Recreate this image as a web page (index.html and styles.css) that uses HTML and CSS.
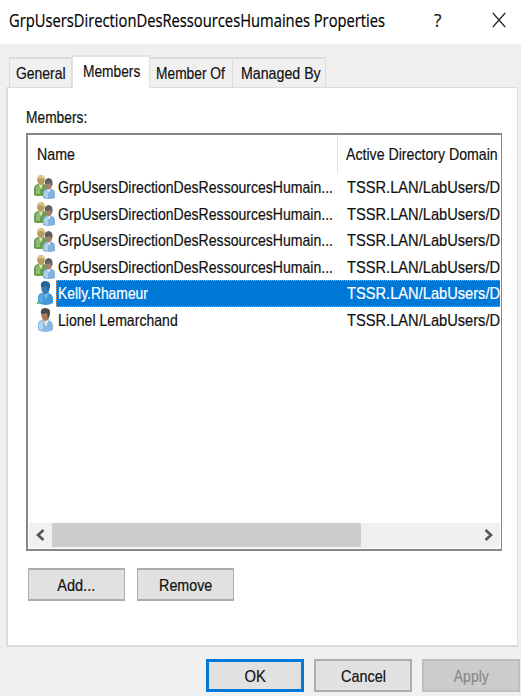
FILE: index.html
```html
<!DOCTYPE html>
<html lang="en">
<head>
<meta charset="utf-8">
<title>GrpUsersDirectionDesRessourcesHumaines Properties</title>
<link rel="stylesheet" href="styles.css">
</head>
<body>
<svg width="0" height="0" class="defs">
  <defs>
    <symbol id="group" viewBox="0 0 21 25">
      <path d="M0 21V14Q1 10 5 10h5q3 1 3 5v7H2z" fill="#67a04c"/>
      <path d="M2 20v-6q1-3 4-3v9z" fill="#91ba7b"/>
      <path d="M5 10h4l-2 6z" fill="#e9ddc4"/>
      <ellipse cx="7" cy="6" rx="3.8" ry="5" fill="#b79b60"/>
      <path d="M3 5Q3 1 7 1q4 0 4 5L7 4z" fill="#d5c68d"/>
      <path d="M9 24v-4q0-5 4-5h4q4 0 4 5v4q-6 2-12 0z" fill="#82b1dd"/>
      <path d="M10 23v-4q1-3 4-3v8z" fill="#acd0ee"/>
      <path d="M13 14h4l-2 5z" fill="#f0efed"/>
      <ellipse cx="14.7" cy="10.5" rx="3.5" ry="5" fill="#a18171"/>
      <path d="M11 10q-1-6 4-6 5 1 3 8l-2-3q-2 1-5 1" fill="#615e60"/>
    </symbol>
    <symbol id="user" viewBox="0 0 17 25">
      <path d="M1 23v-5q0-5 5-5h5q5 1 5 6v4q-7 4-15 0z" fill="#88b7df"/>
      <path d="M2 22v-4q1-4 4-4v9z" fill="#b6d6ef"/>
      <path d="M6 12h6l-3 8z" fill="#eeeae7"/>
      <ellipse cx="8.3" cy="8" rx="4" ry="6" fill="#a87b5f"/>
      <path d="M4 7Q3 1 8 1q6 0 5 6l-2 6-1-7q-3 1-6 1" fill="#4d4949"/>
    </symbol>
    <symbol id="user-selected" viewBox="0 0 17 25">
      <path d="M1 23v-5q0-5 5-5h5q5 1 5 6v4q-7 4-15 0z" fill="#4296d8"/>
      <path d="M2 22v-4q1-4 4-4v9z" fill="#5ba9e3"/>
      <path d="M6 12h6l-3 8z" fill="#74b5e4"/>
      <ellipse cx="8.3" cy="8" rx="4" ry="6" fill="#3b7caf"/>
      <path d="M4 7Q3 1 8 1q6 0 5 6l-2 6-1-7q-3 1-6 1" fill="#236297"/>
      <path d="M0 22h2v2H0z" fill="#65bd36"/>
    </symbol>
  </defs>
</svg>
<div class="dialog">
  <header class="titlebar">
    <h1 class="title">GrpUsersDirectionDesRessourcesHumaines Properties</h1>
    <span class="help">?</span>
    <svg class="close" viewBox="0 0 14 16"><path d="M.8 1l12.4 14M13.2 1L.8 15"/></svg>
  </header>
  <nav class="tabs">
    <div class="tab tab-general"><span class="t s-general">General</span></div>
    <div class="tab tab-members active"><span class="t s-members">Members</span></div>
    <div class="tab tab-memberof"><span class="t s-memberof">Member Of</span></div>
    <div class="tab tab-managed"><span class="t s-managed">Managed By</span></div>
  </nav>
  <main class="panel">
    <div class="label"><span class="t s-label">Members:</span></div>
    <div class="list">
      <div class="head">
        <div class="col-name"><span class="t s-name">Name</span></div>
        <div class="col-domain"><span class="t s-domain">Active Directory Domain</span></div>
      </div>
      <div class="rows">
        <div class="row"><svg class="ico group"><use href="#group"/></svg><div class="cells"><div class="cell"><span class="t s-grp">GrpUsersDirectionDesRessourcesHumain...</span></div><div class="path"><span class="t s-path">TSSR.LAN/LabUsers/D</span></div></div></div>
        <div class="row"><svg class="ico group"><use href="#group"/></svg><div class="cells"><div class="cell"><span class="t s-grp">GrpUsersDirectionDesRessourcesHumain...</span></div><div class="path"><span class="t s-path">TSSR.LAN/LabUsers/D</span></div></div></div>
        <div class="row"><svg class="ico group"><use href="#group"/></svg><div class="cells"><div class="cell"><span class="t s-grp">GrpUsersDirectionDesRessourcesHumain...</span></div><div class="path"><span class="t s-path">TSSR.LAN/LabUsers/D</span></div></div></div>
        <div class="row"><svg class="ico group"><use href="#group"/></svg><div class="cells"><div class="cell"><span class="t s-grp">GrpUsersDirectionDesRessourcesHumain...</span></div><div class="path"><span class="t s-path">TSSR.LAN/LabUsers/D</span></div></div></div>
        <div class="row selected"><svg class="ico user"><use href="#user-selected"/></svg><div class="cells"><div class="cell"><span class="t s-kelly">Kelly.Rhameur</span></div><div class="path"><span class="t s-path">TSSR.LAN/LabUsers/D</span></div></div></div>
        <div class="row"><svg class="ico user"><use href="#user"/></svg><div class="cells"><div class="cell"><span class="t s-lionel">Lionel Lemarchand</span></div><div class="path"><span class="t s-path">TSSR.LAN/LabUsers/D</span></div></div></div>
      </div>
      <div class="scrollbar">
        <div class="arrow"><svg viewBox="0 0 9 12"><path d="M7.5 1L2 6l5.500 5"/></svg></div>
        <div class="thumb"></div>
        <div class="arrow next"><svg viewBox="0 0 9 12"><path d="M1.500 1L7 6l-5.500 5"/></svg></div>
      </div>
    </div>
    <div class="actions">
      <div class="btn small"><span class="t s-add">Add...</span></div>
      <div class="btn small"><span class="t s-remove">Remove</span></div>
    </div>
  </main>
  <footer class="footer">
    <div class="btn default"><span class="t s-ok">OK</span></div>
    <div class="btn"><span class="t s-cancel">Cancel</span></div>
    <div class="btn disabled"><span class="t s-apply">Apply</span></div>
  </footer>
</div>
</body>
</html>
```
FILE: styles.css
```css
* { box-sizing: border-box; }
body { margin: 0; overflow: hidden; background: #f0f0f0; }
.defs { position: absolute; }
.dialog {
  width: 521px; height: 696px; overflow: hidden;
  display: flex; flex-direction: column;
  font: 17px/24px "Liberation Sans", Arial, sans-serif; color: #111;
  -webkit-text-stroke: .2px;
}
.titlebar { height: 44px; flex: none; background: #fff; display: flex; align-items: center; padding: 0 15px 4px 9px; }
.title {
  margin: 0; flex: none; width: 425px; white-space: nowrap; color: #000;
  font: 17.500px/24px "Open Sans", "Noto Sans", sans-serif;
  transform: scaleX(.842); transform-origin: left;
}
.help { width: 10px; font: 19px/24px "Open Sans", sans-serif; transform: scaleX(.9); transform-origin: left; }
.close { width: 14px; height: 16px; margin-left: auto; fill: none; stroke: #222; stroke-width: 1.2; }

/* Condensed labels: each class sets its horizontal scale */
.t { display: inline-block; flex: none; white-space: nowrap; transform: scaleX(var(--s, .83)); transform-origin: left; }
.s-general { --s: .82; }
.s-members { --s: .808; }
.s-memberof { --s: .81; }
.s-managed { --s: .835; }
.s-label { --s: .81; }
.s-name { --s: .835; }
.s-domain { --s: .832; }
.s-grp { --s: .827; }
.s-path { --s: .862; }
.s-kelly { --s: .816; }
.s-lionel { --s: .828; }
.s-add { --s: .856; }
.s-remove { --s: .84; }
.s-ok { --s: .87; }
.s-cancel { --s: .85; }
.s-apply { --s: .823; }

.tabs { display: flex; align-items: flex-end; height: 43px; flex: none; padding-left: 9px; }
.tab { height: 30px; flex: none; border: 1px solid #dcdcdc; border-width: 2px 1px 0 0; padding: 3px 0 0 7px; overflow: hidden; }
.tab-general { width: 63px; border-left-width: 1px; padding-left: 6px; }
.tab-members { width: 78px; padding-left: 10px; }
.tab-memberof { width: 83px; padding-left: 6px; }
.tab-managed { width: 93px; padding-left: 8px; }
.tab.active { height: 33px; background: #fff; border-color: #e0e0e0; border-left-width: 1px; margin-bottom: -1px; position: relative; z-index: 1; }

.panel {
  width: 512px; height: 560px; flex: none; margin-left: 6px; background: #fff;
  border: 2px solid #dcdcdc; border-width: 1px 1px 2px 2px; padding: 18px 0 0 18px;
}
.label { height: 27px; }
.list {
  width: 476px; height: 418px; display: flex; flex-direction: column; padding: 0 1px 1px;
  border: 2px solid #828790; border-right-width: 1px; overflow: hidden;
}
.head { display: flex; height: 38px; flex: none; }
.head > div { padding-top: 8px; }
.col-name { width: 309px; padding-left: 8px; border-right: 1px solid #e2e2e2; }
.col-domain { width: 162px; padding-left: 8px; overflow: hidden; }
.rows { flex: 1; padding-top: 1px; }
.row { display: flex; height: 26.500px; }
.ico { flex: none; height: 25px; }
.ico.group { width: 21px; margin: 0 1px 0 5px; }
.ico.user { width: 17px; margin: 0 2px 0 8px; }
.cells { display: flex; width: 444px; height: 26.500px; overflow: hidden; padding: 2px 1px 0; }
.cell { width: 289px; flex: none; padding-left: 1px; }
.path { width: 154px; flex: none; overflow: hidden; padding-left: .5px; }
.selected .cells { background: #0078d7; color: #fff; border: 1px dotted #ff9440; border-right: 0; padding: 1px 0 0; }
.scrollbar { height: 25px; flex: none; display: flex; background: #f0f0f0; }
.arrow { width: 23px; display: flex; align-items: center; justify-content: center; padding-bottom: 2px; }
.arrow svg { width: 9px; height: 12px; fill: none; stroke: #555; stroke-width: 2.600; }
.thumb { width: 309px; height: 24px; background: #cdcdcd; }
.next { margin-left: auto; }

.actions { display: flex; gap: 12px; margin: 17px 0 0 2px; }
.btn {
  width: 98px; height: 33px; display: flex; align-items: center; justify-content: center;
  background: #e1e1e1; border: 2px solid #adadad; padding-top: 2px;
}
.btn .t { transform-origin: center; }
.btn.small { width: 97px; border-width: 2px 1px; }
.footer { display: flex; gap: 10px; padding: 12px 0 0 206px; }
.footer .btn { flex: none; }
.btn.default { border: 3px solid #0078d7; }
.btn.disabled { background: #ccc; border-color: #bfbfbf; color: #888; }
```
